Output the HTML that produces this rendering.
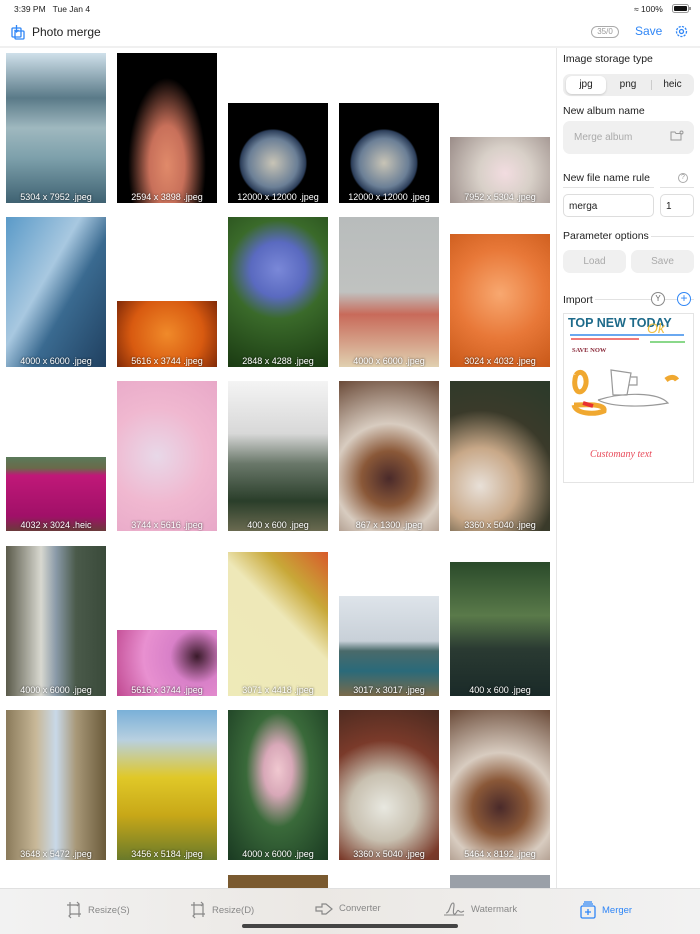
<!DOCTYPE html>
<html><head><meta charset="utf-8"><style>
*{margin:0;padding:0;box-sizing:border-box}
body{width:700px;height:934px;overflow:hidden;background:#fff;font-family:"Liberation Sans",sans-serif;position:relative;color:#222}
.a{position:absolute}
.im{position:absolute;width:100px;overflow:hidden}
.im span{position:absolute;left:0;right:0;bottom:1px;text-align:center;color:#fff;font-size:9px;text-shadow:0 0 2px rgba(0,0,0,.8);white-space:nowrap}
.lbl{position:absolute;font-size:10.5px;color:#222}
.btn{position:absolute;background:#f0f0f0;border-radius:7px;color:#aaa;font-size:10px;text-align:center}
.tab{position:absolute;top:901px;font-size:9.5px;color:#888;display:flex;align-items:center;gap:6px}
</style></head><body>
<div class="a" style="left:14px;top:4px;font-size:8.5px">3:39 PM&nbsp;&nbsp; Tue Jan 4</div>
<div class="a" style="left:634px;top:4px;font-size:8.5px">≈ 100%</div>
<div class="a" style="left:672px;top:4px;width:17px;height:9px;border:1px solid #999;border-radius:2.5px;padding:1px"><div style="width:100%;height:100%;background:#111;border-radius:1px"></div></div>
<div class="a" style="left:689px;top:7px;width:1.5px;height:3px;background:#999"></div>
<svg class="a" style="left:11px;top:24px" width="14" height="16" viewBox="0 0 14 16" fill="none" stroke="#2f86f6" stroke-width="1.3"><rect x="1" y="4" width="9" height="9" rx="1"/><rect x="4" y="7" width="9" height="8" rx="1"/><path d="M5.5 1v7M3.5 6l2 2 2-2"/></svg>
<div class="a" style="left:32px;top:25px;font-size:12px">Photo merge</div>
<div class="a" style="left:591px;top:26px;width:28px;height:12px;border:1px solid #aaa;border-radius:6px;font-size:8px;color:#999;text-align:center;line-height:10px">35/0</div>
<div class="a" style="left:635px;top:24px;font-size:12px;color:#2f86f6">Save</div>
<svg class="a" style="left:675px;top:25px" width="13" height="13" viewBox="0 0 13 13" fill="none" stroke="#2f86f6" stroke-width="1.3"><circle cx="6.5" cy="6.5" r="2"/><circle cx="6.5" cy="6.5" r="5" stroke-dasharray="2.2 1.2"/></svg>
<div class="a" style="left:0;top:46px;width:700px;height:2px;background:#f0f0f0"></div>
<div class="a" style="left:556px;top:48px;width:1px;height:840px;background:#e6e6e6"></div>

<div class="im" style="left:6px;top:53px;height:150px;background:linear-gradient(#cfe0ea,#5a7a88 30%,#9fb8bf 50%,#7da0ab 70%,#3f6272)"><span>5304 x 7952 .jpeg</span></div>
<div class="im" style="left:117px;top:53px;height:150px;background:radial-gradient(ellipse at 50% 75%,#e08a6a 0,#c8705a 25%,#000 55%)"><span>2594 x 3898 .jpeg</span></div>
<div class="im" style="left:228px;top:103px;height:100px;background:radial-gradient(circle at 45% 60%,#c8c4b6 0,#6b7f96 30%,#2c3e5a 40%,#000 42%)"><span>12000 x 12000 .jpeg</span></div>
<div class="im" style="left:339px;top:103px;height:100px;background:radial-gradient(circle at 45% 60%,#c8c4b6 0,#6b7f96 30%,#2c3e5a 40%,#000 42%)"><span>12000 x 12000 .jpeg</span></div>
<div class="im" style="left:450px;top:137px;height:66px;background:radial-gradient(circle at 55% 55%,#f2dce0,#d8d0c8 40%,#9a8c88)"><span>7952 x 5304 .jpeg</span></div>
<div class="im" style="left:6px;top:217px;height:150px;background:linear-gradient(120deg,#5a9ac8,#a8c8e0 40%,#3a6a90 60%,#204060)"><span>4000 x 6000 .jpeg</span></div>
<div class="im" style="left:117px;top:301px;height:66px;background:radial-gradient(circle,#f08a2a,#d85a10 60%,#802a08)"><span>5616 x 3744 .jpeg</span></div>
<div class="im" style="left:228px;top:217px;height:150px;background:radial-gradient(circle at 50% 35%,#7a88d8 0,#5a6ac0 25%,#3a6a2a 45%,#1a3a12)"><span>2848 x 4288 .jpeg</span></div>
<div class="im" style="left:339px;top:217px;height:150px;background:linear-gradient(#b8bcbc,#c0c2c0 50%,#c86a5a 65%,#e0d0b0)"><span>4000 x 6000 .jpeg</span></div>
<div class="im" style="left:450px;top:234px;height:133px;background:radial-gradient(circle at 50% 45%,#f8a870,#e87838 50%,#c85818)"><span>3024 x 4032 .jpeg</span></div>
<div class="im" style="left:6px;top:457px;height:74px;background:linear-gradient(#5a7a5a 0,#6a6a4a 15%,#c01878 25%,#a01068 80%,#6a3a3a)"><span>4032 x 3024 .heic</span></div>
<div class="im" style="left:117px;top:381px;height:150px;background:radial-gradient(circle at 40% 50%,#e8d8e8,#f0b8d0 50%,#e8a8c8)"><span>3744 x 5616 .jpeg</span></div>
<div class="im" style="left:228px;top:381px;height:150px;background:linear-gradient(#f4f4f4,#d8d8d8 35%,#6a786a 55%,#2a3e2a 80%,#6a6a50)"><span>400 x 600 .jpeg</span></div>
<div class="im" style="left:339px;top:381px;height:150px;background:radial-gradient(circle at 50% 65%,#4a2a2a,#8a5838 25%,#d8ccc0 50%,#6a4a38)"><span>867 x 1300 .jpeg</span></div>
<div class="im" style="left:450px;top:381px;height:150px;background:radial-gradient(circle at 30% 70%,#e8e0d8,#c8a888 30%,#3a3a2a 60%,#2a3a2a)"><span>3360 x 5040 .jpeg</span></div>
<div class="im" style="left:6px;top:546px;height:150px;background:linear-gradient(90deg,#5a5a4a,#d8d8d0 35%,#8a9aa8 50%,#4a5a4a 70%,#3a4a3a)"><span>4000 x 6000 .jpeg</span></div>
<div class="im" style="left:117px;top:630px;height:66px;background:radial-gradient(circle at 80% 40%,#3a1a2a,#d880c8 30%,#e890d0 60%,#c04890)"><span>5616 x 3744 .jpeg</span></div>
<div class="im" style="left:228px;top:552px;height:144px;background:linear-gradient(225deg,#d85a2a 0,#c8a838 25%,#eee8b8 45%,#eeeab8)"><span>3071 x 4418 .jpeg</span></div>
<div class="im" style="left:339px;top:596px;height:100px;background:linear-gradient(#dee4ea,#c8d0d8 45%,#4a6a6a 55%,#2a6a7a 75%,#7a6a4a)"><span>3017 x 3017 .jpeg</span></div>
<div class="im" style="left:450px;top:562px;height:134px;background:linear-gradient(#2a4a2a,#5a7a4a 40%,#2a3a32 65%,#1a2a28)"><span>400 x 600 .jpeg</span></div>
<div class="im" style="left:6px;top:710px;height:150px;background:linear-gradient(90deg,#8a7a5a,#c8b898 30%,#c8d8e8 50%,#a89878 70%,#6a5a3a)"><span>3648 x 5472 .jpeg</span></div>
<div class="im" style="left:117px;top:710px;height:150px;background:linear-gradient(#7ab0d8,#b8d0e0 20%,#e0c828 45%,#c8a818 70%,#6a7a2a)"><span>3456 x 5184 .jpeg</span></div>
<div class="im" style="left:228px;top:710px;height:150px;background:radial-gradient(ellipse at 50% 40%,#f0c8d0,#d8a8b8 20%,#3a6a3a 45%,#1a3a22)"><span>4000 x 6000 .jpeg</span></div>
<div class="im" style="left:339px;top:710px;height:150px;background:radial-gradient(circle at 45% 65%,#e8e8e0,#c8c0b0 30%,#7a3a2a 60%,#4a2a20)"><span>3360 x 5040 .jpeg</span></div>
<div class="im" style="left:450px;top:710px;height:150px;background:radial-gradient(circle at 50% 65%,#4a2a2a,#8a5838 25%,#d8ccc0 50%,#6a4a38)"><span>5464 x 8192 .jpeg</span></div>
<div class="im" style="left:228px;top:875px;height:20px;background:#7a5a30"></div>
<div class="im" style="left:450px;top:875px;height:20px;background:#9aa0a8"></div>

<div class="lbl" style="left:563px;top:53px">Image storage type</div>
<div class="a" style="left:563px;top:74px;width:131px;height:22px;background:#eeeeee;border-radius:7px"></div>
<div class="a" style="left:566px;top:76px;width:40px;height:18px;background:#fff;border-radius:6px;box-shadow:0 1px 2px rgba(0,0,0,.15);font-size:10px;text-align:center;line-height:18px">jpg</div>
<div class="a" style="left:612px;top:76px;width:32px;font-size:10px;text-align:center;line-height:18px">png</div>
<div class="a" style="left:651px;top:80px;width:1px;height:10px;background:#ccc"></div>
<div class="a" style="left:655px;top:76px;width:35px;font-size:10px;text-align:center;line-height:18px">heic</div>
<div class="lbl" style="left:563px;top:105px">New album name</div>
<div class="a" style="left:563px;top:121px;width:131px;height:33px;background:#f0f0f0;border-radius:7px"></div>
<div class="a" style="left:574px;top:132px;font-size:10px;color:#aaa">Merge album</div>
<svg class="a" style="left:670px;top:130px" width="14" height="11" viewBox="0 0 14 11" fill="none" stroke="#999" stroke-width="1"><path d="M1 2h4l1 1.5h5v6.5H1z"/><circle cx="11.5" cy="2.5" r="1.5"/></svg>
<div class="lbl" style="left:563px;top:172px">New file name rule</div>
<div class="a" style="left:563px;top:187px;width:91px;height:1px;background:#e2e2e2"></div>
<div class="a" style="left:660px;top:187px;width:34px;height:1px;background:#e2e2e2"></div>
<div class="a" style="left:678px;top:173px;width:10px;height:10px;border:1px solid #aaa;border-radius:50%;font-size:7px;color:#999;text-align:center;line-height:8px">?</div>
<div class="a" style="left:563px;top:194px;width:91px;height:23px;border:1px solid #ddd;border-radius:5px;font-size:10px;padding:6px 0 0 5px">merga</div>
<div class="a" style="left:660px;top:194px;width:34px;height:23px;border:1px solid #ddd;border-radius:5px;font-size:10px;padding:6px 0 0 5px">1</div>
<div class="lbl" style="left:563px;top:230px;background:#fff;padding-right:2px;z-index:2">Parameter options</div>
<div class="a" style="left:563px;top:236px;width:131px;height:1px;background:#e2e2e2"></div>
<div class="btn" style="left:563px;top:250px;width:63px;height:23px;line-height:23px">Load</div>
<div class="btn" style="left:631px;top:250px;width:63px;height:23px;line-height:23px">Save</div>
<div class="a" style="left:563px;top:299px;width:131px;height:1px;background:#e2e2e2"></div>
<div class="lbl" style="left:563px;top:294px;background:#fff;padding-right:2px">Import</div>
<div class="a" style="left:651px;top:292px;width:14px;height:14px;border:1px solid #888;border-radius:50%;background:#fff;font-size:8px;color:#666;text-align:center;line-height:12px">Y</div>
<div class="a" style="left:677px;top:292px;width:14px;height:14px;border:1.3px solid #2f86f6;border-radius:50%;background:#fff;font-size:12px;color:#2f86f6;text-align:center;line-height:11px">+</div>
<div class="a" style="left:563px;top:313px;width:131px;height:170px;border:1px solid #e4e4e4"></div>
<div class="a" style="left:568px;top:316px;font-size:12.5px;font-weight:bold;color:#1d6a8a">TOP NEW TODAY</div>
<div class="a" style="left:570px;top:334px;width:114px;height:2px;background:#6aa8f0"></div>
<div class="a" style="left:571px;top:338px;width:68px;height:2px;background:#f07a7a"></div>
<div class="a" style="left:650px;top:341px;width:35px;height:2px;background:#8ad88a"></div>
<div class="a" style="left:647px;top:320px;font-size:14px;color:#f0c040;font-style:italic">Ok</div>
<div class="a" style="left:572px;top:347px;font-size:6.5px;font-weight:bold;color:#8a2a3a;font-family:'Liberation Serif',serif">SAVE NOW</div>
<svg class="a" style="left:568px;top:365px" width="120" height="60" viewBox="0 0 120 60" fill="none"><path d="M8 10c6-8 14 4 8 14-6 8-12-2-8-14" stroke="#f0a830" stroke-width="5"/><path d="M43 5l20 3-4 22-14 0z M63 12h6v8h-8 M30 35c25-8 60-8 70 3-20 4-55 5-70-3" stroke="#999" stroke-width="1.2"/><path d="M98 15c5-4 9-3 11 0" stroke="#f0a830" stroke-width="5"/><path d="M6 40c10 0 32-2 30 6-10 4-28 3-30-6" stroke="#f0a830" stroke-width="5"/><path d="M15 38l10 3" stroke="#e83030" stroke-width="4"/></svg>
<div class="a" style="left:590px;top:449px;font-size:10px;color:#e84a5a;font-style:italic;font-family:'Liberation Serif',serif">Customany text</div>

<div class="a" style="left:0;top:888px;width:700px;height:46px;background:linear-gradient(90deg,#f2f2f2,#ebe8e4 45%,#f2f2f2);border-top:1px solid #e0e0e0"></div>
<div class="tab" style="left:66px"><svg width="16" height="18" viewBox="0 0 16 18" fill="none" stroke="#888" stroke-width="1.2"><path d="M4 1v12h11M1 4h12v12M11 1l2 2-2 2M5 17l-2-2 2-2"/></svg>Resize(S)</div>
<div class="tab" style="left:190px"><svg width="16" height="18" viewBox="0 0 16 18" fill="none" stroke="#888" stroke-width="1.2"><path d="M4 1v12h11M1 4h12v12M11 1l2 2-2 2M5 17l-2-2 2-2"/></svg>Resize(D)</div>
<div class="tab" style="left:315px"><svg width="18" height="14" viewBox="0 0 18 14" fill="none" stroke="#888" stroke-width="1.2"><path d="M1 6h6V3h4l6 5-6 5H7v-3H1z"/></svg>Converter</div>
<div class="tab" style="left:443px"><svg width="22" height="16" viewBox="0 0 22 16" fill="none" stroke="#888" stroke-width="1.1"><path d="M3 12c4 0 4-10 7-10 3 0-2 12 2 11 2-1 2-5 4-3 2 2 3 1 5 0M1 14h20"/></svg>Watermark</div>
<div class="tab" style="left:580px;color:#2f86f6"><svg width="16" height="18" viewBox="0 0 16 18" fill="none" stroke="#2f86f6" stroke-width="1.3"><path d="M4 1h8M3 3h10"/><rect x="1" y="5" width="14" height="12" rx="1.5"/><path d="M8 8v6M5 11h6"/></svg>Merger</div>
<div class="a" style="left:242px;top:924px;width:216px;height:4px;border-radius:2px;background:#444"></div>
</body></html>
